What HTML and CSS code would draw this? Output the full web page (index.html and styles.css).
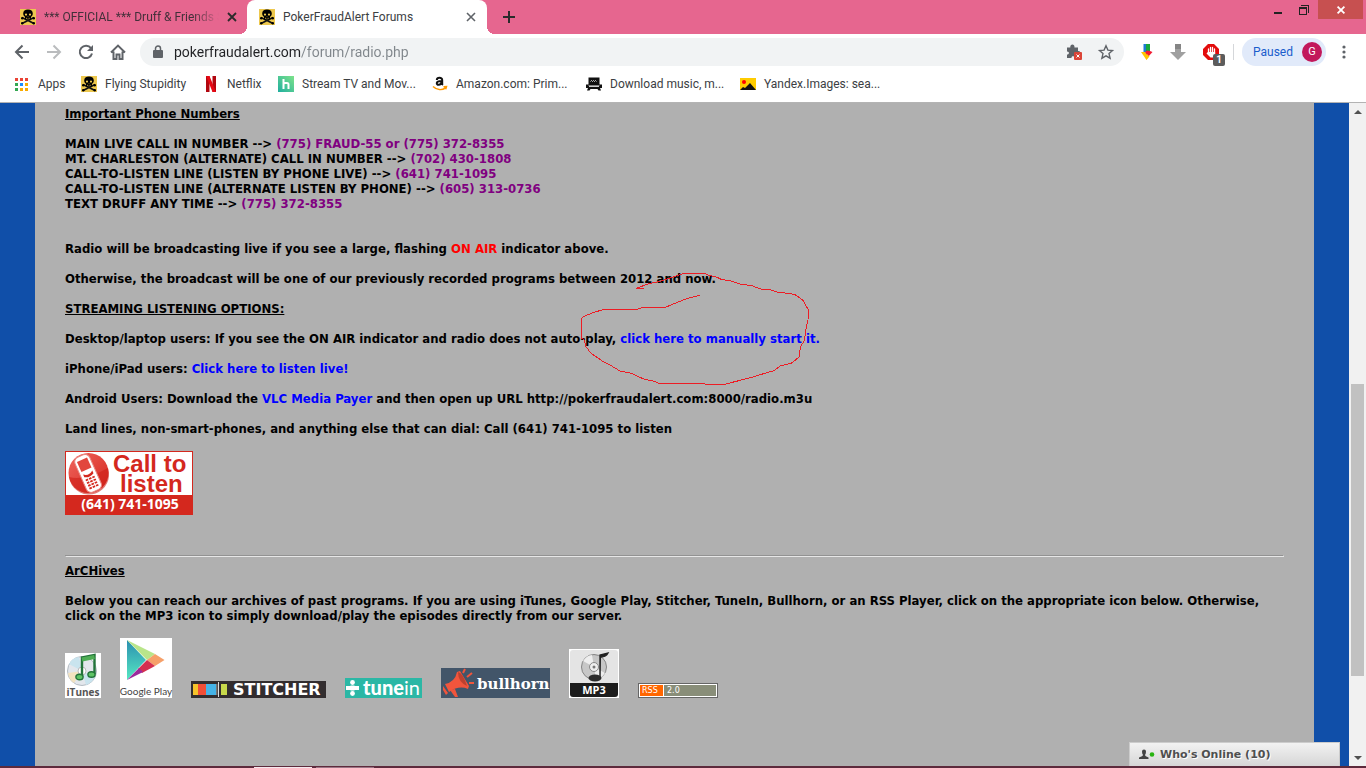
FILE: index.html
```html
<!DOCTYPE html>
<html lang="en">
<head>
<meta charset="utf-8">
<title>PokerFraudAlert Forums</title>
<link rel="stylesheet" href="styles.css">
</head>
<body>
<svg class="defs" aria-hidden="true">
  <symbol id="skull" viewBox="0 0 16 16">
    <rect width="16" height="16" fill="#edc84e"/>
    <path d="M2 8.5L14 14.5M14 8.5L2 14.5" stroke="#111" stroke-width="1.8"/>
    <circle cx="2.2" cy="9.2" r="1.2"/><circle cx="13.8" cy="9.2" r="1.2"/><circle cx="2.2" cy="14.2" r="1.2"/><circle cx="13.8" cy="14.2" r="1.2"/>
    <path d="M3.2 4.5C3.2 1.8 5 .5 8 .5s4.800 1.300 4.800 4c0 1.600-.6 2.500-1.800 3.200V10.500H5V7.700C3.800 7 3.200 6.100 3.200 4.500z"/>
    <circle cx="6" cy="5.600" r="1.100" fill="#edc84e"/><circle cx="10" cy="5.600" r="1.100" fill="#edc84e"/>
    <path d="M6 9.300h1M7.700 9.300h.8M9.300 9.300h.8M7.700 7.400h.6" stroke="#edc84e" stroke-width=".8"/>
  </symbol>
</svg>

<header class="browser">
  <div class="tabstrip">
    <div class="tab">
      <svg class="favicon"><use href="#skull"/></svg>
      <span class="tab-title faded">*** OFFICIAL *** Druff &amp; Friends S</span>
      <button class="tab-close" aria-label="Close tab"><svg width="10" height="10" viewBox="0 0 10 10"><path d="M1 1l8 8M9 1L1 9" stroke="#2b2b2b" stroke-width="1.800"/></svg></button>
    </div>
    <div class="tab active">
      <svg class="favicon"><use href="#skull"/></svg>
      <span class="tab-title">PokerFraudAlert Forums</span>
      <button class="tab-close" aria-label="Close tab"><svg width="10" height="10" viewBox="0 0 10 10"><path d="M1 1l8 8M9 1L1 9" stroke="#5f6368" stroke-width="1.600"/></svg></button>
    </div>
    <button class="new-tab" aria-label="New tab"><svg width="12" height="12" viewBox="0 0 12 12"><path d="M6 0v12M0 6h12" stroke="#2b2b2b" stroke-width="2"/></svg></button>
    <div class="window-controls">
      <button aria-label="Minimize"><svg width="8" height="12" viewBox="0 0 8 12"><path d="M0 9h8" stroke="#222" stroke-width="2"/></svg></button>
      <button aria-label="Restore"><svg width="10" height="10" viewBox="0 0 10 10" fill="none" stroke="#222" shape-rendering="crispEdges"><path d="M2 .5h7.500V8"/><path d="M.5 2.500h7v7h-7zM.5 3.500h7"/></svg></button>
      <button class="window-close" aria-label="Close"><svg width="8" height="8" viewBox="0 0 8 8"><path d="M.6.6l6.800 6.800M7.400.6L.6 7.400" stroke="#fff" stroke-width="1.800"/></svg></button>
    </div>
  </div>

  <div class="toolbar">
    <div class="nav">
      <button aria-label="Back"><svg width="16" height="16" viewBox="0 0 16 16" fill="none" stroke="#5f6368" stroke-width="2"><path d="M15 8H2.500M8.500 1.500L2 8l6.500 6.500"/></svg></button>
      <button aria-label="Forward"><svg width="16" height="16" viewBox="0 0 16 16" fill="none" stroke="#babcbe" stroke-width="2"><path d="M1 8h12.500M7.500 1.500L14 8l-6.500 6.500"/></svg></button>
      <button aria-label="Reload"><svg width="16" height="16" viewBox="0 0 16 16"><path d="M13 4.200A6.200 6.200 0 1 0 14 9.500" fill="none" stroke="#5f6368" stroke-width="2"/><path d="M15 1v6H9z" fill="#5f6368"/></svg></button>
      <button aria-label="Home"><svg width="16" height="16" viewBox="0 0 16 16" fill="none" stroke="#5f6368" stroke-width="2"><path d="M1 8.500L8 1.600l7 6.900M3.500 7.500V15h3v-4.500h3V15h3V7.500"/></svg></button>
    </div>
    <div class="omnibox">
      <svg width="10" height="14" viewBox="0 0 10 14"><path d="M2.500 6V3.500a2.500 2.500 0 0 1 5 0V6" fill="none" stroke="#5f6368" stroke-width="1.500"/><rect x="0" y="5" width="10" height="8" rx="1" fill="#5f6368"/></svg>
      <input class="url" type="text" aria-label="Address" value="pokerfraudalert.com/forum/radio.php">
      <button aria-label="Blocked plugin"><svg width="17" height="17" viewBox="0 0 17 17"><path d="M1 3.500h3.300c-.5-4 4.700-4 4.200 0H12V7c3.200-.5 3.200 4 0 3.500V14H8.500c.2-2.500-3.300-2.500-3 0H1v-3.500c2.600.2 2.600-3.200 0-3z" fill="#5f6368"/><rect x="8" y="8" width="8" height="8" rx="1" fill="#db4437"/><path d="M10.500 10.500l3 3m0-3l-3 3" stroke="#fff"/></svg></button>
      <button aria-label="Bookmark"><svg width="16" height="16" viewBox="0 0 16 16"><path d="M8 1.800l1.900 4.300 4.600.4-3.500 3.100 1.100 4.600L8 11.800l-4.100 2.400L5 9.600 1.500 6.500l4.600-.4z" fill="none" stroke="#5f6368" stroke-width="1.400"/></svg></button>
    </div>
    <div class="extensions">
      <button aria-label="Downloader"><svg width="12" height="16" viewBox="0 0 12 16"><path d="M2.500 0H6v8l-3.500.5z" fill="#1f7ad1"/><path d="M5 0h4v7H5z" fill="#16a83b"/><path d="M0 8h4l3 4-1.500 4z" fill="#ffc400"/><path d="M4 8l2-1.500L9 7l2.500 1L7 13z" fill="#f31931"/><path d="M4 12l2-2 2.500 2.500L5.500 16z" fill="#ffc400"/></svg></button>
      <button aria-label="Download"><svg width="16" height="16" viewBox="0 0 16 16"><path d="M5 0h6v8h5l-8 8-8-8h5z" fill="#a0a0a0"/><path d="M5 0h6v5H5z" fill="#858585"/></svg></button>
      <button aria-label="Ad blocker" class="badged"><svg width="16" height="16" viewBox="0 0 16 16"><path d="M5 0h6l5 5v6l-5 5H5l-5-5V5z" fill="#e30c0c"/><path d="M5.500 5v4M7.500 3.500v5M9.500 3.500v5M11.500 5v5" stroke="#fff" stroke-width="1.300" stroke-linecap="round"/><path d="M4.900 8h7.200v3l-2 2.500H7.500L3.500 9.500z" fill="#fff"/></svg><span class="badge">1</span></button>
    </div>
    <button class="profile">Paused <span class="avatar">G</span></button>
    <button class="menu" aria-label="Menu"><svg width="4" height="14" viewBox="0 0 4 14" fill="#5f6368"><circle cx="2" cy="2" r="1.600"/><circle cx="2" cy="7" r="1.600"/><circle cx="2" cy="12" r="1.600"/></svg></button>
  </div>

  <nav class="bookmarks">
    <a href="#" class="apps"><svg width="13" height="13" viewBox="0 0 13 13"><path d="M0 0h3v3H0zM5 0h3v3H5zM10 0h3v3h-3z" fill="#ea4335"/><path d="M0 5h3v3H0zM0 10h3v3H0z" fill="#34a853"/><path d="M5 5h3v3H5z" fill="#1a8cff"/><path d="M10 5h3v3h-3zM5 10h3v3H5zM10 10h3v3h-3z" fill="#f9ab00"/></svg><span>Apps</span></a>
    <a href="#" class="stupidity"><svg class="favicon"><use href="#skull"/></svg><span>Flying Stupidity</span></a>
    <a href="#" class="netflix"><svg width="16" height="16" viewBox="0 0 16 16"><path d="M3 0h3.500v16H3zM9.500 0H13v16H9.500z" fill="#b1060f"/><path d="M3 0h3.500L13 16H9.500z" fill="#e50914"/></svg><span>Netflix</span></a>
    <a href="#" class="stream"><svg width="16" height="16" viewBox="0 0 16 16"><defs><linearGradient id="hulu" x1="1" y1="0" x2="0" y2="1"><stop offset="0" stop-color="#7ee38a"/><stop offset="1" stop-color="#1fae9f"/></linearGradient></defs><rect width="16" height="16" fill="url(#hulu)"/><path d="M5.500 3v10M5.500 8.500q0-1.500 1.500-1.500h2q1.500 0 1.500 1.500V13" fill="none" stroke="#fff" stroke-width="2"/></svg><span>Stream TV and Mov...</span></a>
    <a href="#" class="amazon"><svg width="16" height="16" viewBox="0 0 16 16"><path d="M4.800 4C5 1.200 10.200 1 10.200 4v3.500q0 1 .7 1.500M9.500 5C3 5 4.500 9 6.500 8.800 8.500 8.700 9.500 7.500 9.500 6" fill="none" stroke="#111" stroke-width="2"/><path d="M1 10.500c4 3.800 9 3.800 12.500 1.500M11.500 10.800l3-.3-.8 2.800" fill="none" stroke="#f90" stroke-width="1.500"/></svg><span>Amazon.com: Prim...</span></a>
    <a href="#" class="music"><svg width="16" height="16" viewBox="0 0 16 16"><path d="M2.500 1.500h11v8h-11zM0 8.500h2.500v1.500h11V8.500H16v3.500h-2l1 2.500h-2.500L11.500 13h-7l-1 1.500H1L2 12H0z" fill="#111"/><path d="M4.500 5.500l1-1 1 1 1-1 1 1 1-1 1 1M3 10.500h10" fill="none" stroke="#fff" stroke-width=".8"/></svg><span>Download music, m...</span></a>
    <a href="#" class="yandex"><svg width="16" height="12" viewBox="0 0 16 12"><rect width="16" height="12" fill="#fc0"/><path d="M0 12l3-3 2 1 5-5 6 7z" fill="#111"/><circle cx="4" cy="4" r="2" fill="#f00"/></svg><span>Yandex.Images: sea...</span></a>
  </nav>
</header>

<div class="viewport">
  <main class="page">
    <div class="content">
      <h2>Important Phone Numbers</h2>
      <p class="wide">MAIN LIVE CALL IN NUMBER --&gt; <span class="phone">(775) FRAUD-55 or (775) 372-8355</span><br>
      MT. CHARLESTON (ALTERNATE) CALL IN NUMBER --&gt; <span class="phone">(702) 430-1808</span><br>
      CALL-TO-LISTEN LINE (LISTEN BY PHONE LIVE) --&gt; <span class="phone">(641) 741-1095</span><br>
      CALL-TO-LISTEN LINE (ALTERNATE LISTEN BY PHONE) --&gt; <span class="phone">(605) 313-0736</span><br>
      TEXT DRUFF ANY TIME --&gt; <span class="phone">(775) 372-8355</span></p>
      <p>Radio will be broadcasting live if you see a large, flashing <span class="onair">ON AIR</span> indicator above.</p>
      <p>Otherwise, the broadcast will be one of our previously recorded programs between 2012 and now.</p>
      <h2>STREAMING LISTENING OPTIONS:</h2>
      <p>Desktop/laptop users: If you see the ON AIR indicator and radio does not auto-play, <a href="#">click here to manually start it.</a></p>
      <p>iPhone/iPad users: <a href="#">Click here to listen live!</a></p>
      <p>Android Users: Download the <a href="#">VLC Media Payer</a> and then open up URL http://pokerfraudalert.com:8000/radio.m3u</p>
      <p>Land lines, non-smart-phones, and anything else that can dial: Call (641) 741-1095 to listen</p>
      <a class="call" href="#">
        <svg width="128" height="64" viewBox="0 0 128 64">
          <defs><linearGradient id="ball" x1="0" y1="0" x2="1" y2="1"><stop offset="0" stop-color="#f0665e"/><stop offset="1" stop-color="#d3241c"/></linearGradient></defs>
          <rect width="128" height="64" fill="#d4281e"/><rect x="1" y="1" width="126" height="43" fill="#fff"/>
          <circle cx="23.500" cy="22" r="20" fill="url(#ball)"/>
          <path d="M4 26Q20 30 43 17A20 20 0 0 1 5 30z" fill="#cf2018" opacity=".6"/>
          <g transform="rotate(-24 24 22)"><rect x="15" y="3" width="16" height="38" rx="5" fill="#fff" stroke="#e9857f"/><rect x="17.500" y="7" width="11" height="11" fill="#e2463d"/><path d="M18 21q5 4 10 0v3q-5 3-10 0z" fill="#d4281e"/><path d="M18 27.500h10M18 30.500h10M18 33.500h10M18 36.500h10" stroke="#d4281e" stroke-width="1.800" stroke-dasharray="2.600 1"/></g>
          <text class="call-big" x="48" y="21">Call to</text><text class="call-big" x="55" y="41">listen</text>
          <text class="call-number" x="65" y="58" text-anchor="middle">(641) 741-1095</text>
        </svg>
      </a>
      <hr>
      <h2>ArCHives</h2>
      <p>Below you can reach our archives of past programs. If you are using iTunes, Google Play, Stitcher, TuneIn, Bullhorn, or an RSS Player, click on the appropriate icon below. Otherwise,<br>click on the MP3 icon to simply download/play the episodes directly from our server.</p>
      <div class="players">
        <a href="#"><svg width="36" height="45" viewBox="0 0 36 45">
          <rect width="36" height="45" fill="#fff"/><circle cx="17" cy="18" r="14.500" fill="#e3e7ec" stroke="#b4bbc2"/><path d="M17 18L4 11Q8 4 14 4zM17 18l13 6q-3 6-9 8z" fill="#c9e4ee"/><path d="M17 18L3 20q1 7 6 10z" fill="#f3e3c0"/><circle cx="17" cy="18" r="4" fill="#fff" stroke="#bbb"/>
          <path d="M17 24V4.500L29.500 2v19" fill="none" stroke="#23743a" stroke-width="2.400"/><path d="M17 6.500L29.500 4" stroke="#4fae55" stroke-width="4"/><ellipse cx="14.500" cy="24" rx="3.600" ry="2.800" fill="#5fc465" stroke="#23743a" stroke-width="1.400"/><ellipse cx="26.500" cy="21.500" rx="3.600" ry="2.800" fill="#5fc465" stroke="#23743a" stroke-width="1.400"/>
          <text class="itunes" x="18" y="43" text-anchor="middle">iTunes</text></svg></a>
        <a href="#"><svg width="52" height="60" viewBox="0 0 52 60">
          <defs><linearGradient id="play" x1="0" y1="0" x2="0" y2="1"><stop offset="0" stop-color="#2b8fb0"/><stop offset="1" stop-color="#56e8c2"/></linearGradient></defs>
          <rect width="52" height="60" fill="#fff"/><path d="M7 2v40l19-20z" fill="url(#play)"/><path d="M7 2l20 20 8-6z" fill="#b9e58a"/><path d="M35 16l9.500 6L35 28l-8-6z" fill="#f6a069"/><path d="M27 22l8 6-13 7-4-4z" fill="#d5304f"/><path d="M7 42l12-12 4 4z" fill="#9b2a9b"/>
          <text class="gplay" x="26" y="57" text-anchor="middle">Google Play</text></svg></a>
        <a href="#"><svg width="135" height="17" viewBox="0 0 135 17">
          <rect width="135" height="17" fill="#322d2f"/><path d="M2 3h5v11H2z" fill="#f6c32a"/><path d="M7 3h8v11H7z" fill="#f04e37"/><path d="M15 3h10v11H15z" fill="#45b3e7"/><path d="M25 3h1.500v11H25z" fill="#777"/><path d="M27.500 1v15" stroke="#ddd"/><path d="M30 3h6v11h-6z" fill="#c8d94b"/>
          <text class="stitcher" x="42" y="14">STITCHER</text></svg></a>
        <a href="#"><svg width="77" height="20" viewBox="0 0 77 20">
          <rect width="77" height="20" fill="#2bb7a5"/><path d="M1 10h13M7.500 7.500v5" stroke="#fff" stroke-width="4"/><circle cx="7.500" cy="4.500" r="2.400" fill="#fff"/><circle cx="7.500" cy="15.500" r="2.400" fill="#fff"/>
          <text class="tunein" x="18" y="17"><tspan class="heavy">tune</tspan>in</text></svg></a>
        <a href="#"><svg width="109" height="30" viewBox="0 0 109 30">
          <rect width="109" height="30" fill="#425569"/><path d="M2 18l5 7-2 2-3-5zM4 16Q14 14 16 4l3-1 9 15-1 3Q18 17 8 24z" fill="#f1553c"/><path d="M17 4q5 1 9 14-9-4-9-14z" fill="#bd412f"/><path d="M9 22l5 7h3l-3-8z" fill="#f1553c"/><path d="M22 5l2-4M26 9l5-4M28 15h5" stroke="#f1553c" stroke-width="2"/>
          <text class="bullhorn" x="36" y="21">bullhorn</text></svg></a>
        <a href="#"><svg width="50" height="49" viewBox="0 0 50 49">
          <rect width="50" height="49" fill="#fff"/><rect x="1" y="1" width="48" height="47" rx="3" fill="#e4e4e4"/><path d="M1 34h48v11q0 3-3 3H4q-3 0-3-3z" fill="#1c1c1c"/>
          <circle cx="25" cy="18" r="12.500" fill="#c7c7c7" stroke="#858585"/><path d="M25 18L14 12q4-6 9-6zM25 18l11 6q-4 6-9 6z" fill="#eee"/><circle cx="25" cy="18" r="4.500" fill="#eee" stroke="#888"/><circle cx="25" cy="18" r="1.500" fill="#777"/><path d="M31 28V6l8-2q-2 4-7 4" fill="#222" stroke="#222" stroke-width="1.400"/><ellipse cx="26" cy="29" rx="6.500" ry="3.500" fill="#2b2b2b"/>
          <text class="mp3" x="25" y="45" text-anchor="middle">MP3</text></svg></a>
        <a href="#"><svg width="80" height="15" viewBox="0 0 80 15">
          <rect width="80" height="15" fill="#666"/><rect x="1" y="1" width="78" height="13" fill="#fff"/><rect x="2" y="2" width="23" height="11" fill="#f60"/><rect x="26" y="2" width="52" height="11" fill="#898e79"/>
          <text class="rss" x="4" y="10">RSS</text><text class="rss" x="29" y="10">2.0</text></svg></a>
      </div>
    </div>
    <svg class="scribble" viewBox="0 0 780 405" fill="none" stroke="#ed1c24" stroke-width="3" shape-rendering="crispEdges" aria-hidden="true"><path d="M221 85H199L239 70L268 65L315 49L343 40H402L417 46L437 50L454 58L484 63L511 72L545 77L575 88L600 89L623 97L655 100L675 104L698 120L715 149L714 180L706 216L704 240L691 261L688 291L663 310L631 318L612 332L571 344L542 353L463 373H415L385 370H266L254 364L221 357L184 340L150 333L120 315L97 303L78 290L63 280L48 260L43 240L35 234V174L48 166L78 155L101 149H197L217 143H284L322 127L352 115L389 106"/></svg>
    <button class="online"><svg width="17" height="11" viewBox="0 0 17 11"><path d="M3 2.500Q3 .5 5 .5t2 2q0 2-1 3.500 0 1 3.500 2.500V10H0V8.500Q4 7 4 6 3 4.500 3 2.500z" fill="#444"/><circle cx="13" cy="5.500" r="2.300" fill="#28b411"/></svg>Who's Online (10)</button>
  </main>
  <div class="scrollbar" aria-hidden="true">
    <div class="arrow"><svg width="8" height="4" viewBox="0 0 8 4"><path d="M0 4l4-4 4 4z" fill="#505050"/></svg></div>
    <div class="before"></div><div class="thumb"></div><div class="after"></div>
    <div class="arrow"><svg width="8" height="4" viewBox="0 0 8 4"><path d="M0 0l4 4 4-4z" fill="#505050"/></svg></div>
  </div>
</div>
<div class="taskbar"><span></span><span class="dim"></span></div>
</body>
</html>
```
FILE: styles.css
```css
* { box-sizing: border-box; }
body {
  margin: 0;
  height: 100vh;
  display: flex;
  flex-direction: column;
  overflow: hidden;
  background: #fff;
  font-family: "Segoe UI", Roboto, "Open Sans", sans-serif;
  font-size: 12px;
  color: #3c4043;
}
button {
  border: 0;
  padding: 0;
  background: none;
  font: inherit;
  color: inherit;
  display: flex;
  align-items: center;
  justify-content: center;
}
a { text-decoration: none; color: inherit; }
svg { display: block; flex: none; overflow: visible; }
.defs { width: 0; height: 0; position: absolute; }
.favicon { width: 16px; height: 16px; }

/* Tab strip */
.browser { flex: none; border-bottom: 1px solid #b3b3b3; }
.tabstrip { display: flex; height: 34px; background: #e6668f; }
.tab {
  position: relative;
  display: flex;
  align-items: center;
  gap: 8px;
  width: 247px;
  padding: 0 10px 0 20px;
}
.tab.active {
  width: 240px;
  padding: 0 11px 0 12px;
  background: #fff;
  border-radius: 8px 8px 0 0;
}
.tab.active::before,
.tab.active::after {
  content: "";
  position: absolute;
  bottom: 0;
  width: 8px;
  height: 8px;
}
.tab.active::before { left: -8px; background: radial-gradient(circle at 0 0, transparent 8px, #fff 8px); }
.tab.active::after { right: -8px; background: radial-gradient(circle at 100% 0, transparent 8px, #fff 8px); }
.tab-title { flex: 1; overflow: hidden; white-space: nowrap; }
.faded { color: #43303a; -webkit-mask-image: linear-gradient(90deg, #000 85%, transparent); mask-image: linear-gradient(90deg, #000 85%, transparent); }
.tab-close { width: 10px; height: 16px; }
.new-tab { width: 44px; }
.window-controls { margin-left: auto; margin-right: 3px; display: flex; height: 19px; }
.window-controls button { width: 26px; }
.window-controls .window-close { width: 45px; margin-left: 1px; background: #c75050; }

/* Toolbar */
.toolbar { display: flex; align-items: center; height: 36px; padding: 0 20px 0 14px; }
.nav { display: flex; gap: 16px; margin-right: 14px; }
.omnibox {
  flex: 1;
  display: flex;
  align-items: center;
  gap: 15px;
  height: 28px;
  padding: 0 10px 0 13px;
  border-radius: 14px;
  background: #f1f3f4;
}
.url {
  flex: 1;
  min-width: 0;
  margin-left: -4px;
  padding: 0;
  border: 0;
  outline: 0;
  font: 14px "Segoe UI", Roboto, "Open Sans", sans-serif;
  color: #202124;
  background: linear-gradient(90deg, #202124 127px, #80868b 127px);
  -webkit-background-clip: text;
  background-clip: text;
  -webkit-text-fill-color: transparent;
}
.extensions {
  display: flex;
  gap: 17px;
  padding-right: 14px;
  margin: 0 8px 0 17px;
  border-right: 1px solid #d5d7da;
}
.badged { position: relative; }
.badge {
  position: absolute;
  left: 10px;
  top: 10px;
  width: 12px;
  height: 12px;
  border-radius: 2px;
  background: #5c5c5c;
  color: #fff;
  font-size: 10px;
  font-weight: 700;
  line-height: 12px;
}
.profile {
  gap: 9px;
  height: 28px;
  padding: 0 4px 0 11px;
  border-radius: 14px;
  background: #e1eafa;
  color: #1a5dcc;
}
.avatar {
  width: 20px;
  height: 20px;
  border-radius: 50%;
  background: #c2185b;
  color: #fff;
  font-size: 11px;
  line-height: 20px;
}
.menu { margin-left: 16px; }

/* Bookmarks */
.bookmarks { display: flex; height: 32px; padding: 0 0 4px 15px; }
.bookmarks a { display: flex; align-items: center; gap: 8px; white-space: nowrap; }
.bookmarks .apps { width: 66px; gap: 10px; }
.stupidity { width: 122px; }
.netflix { width: 75px; }
.stream { width: 154px; }
.amazon { width: 154px; }
.music { width: 154px; }

/* Page */
.viewport { flex: 1; min-height: 0; display: flex; }
.page {
  position: relative;
  flex: 1;
  padding: 0 35px;
  overflow: hidden;
  background: #104fa9;
}
.content {
  min-height: 100%;
  padding: 3px 30px 0;
  background: #b0b0b0;
  color: #000;
  font: bold 13px/15px Tahoma, "DejaVu Sans Condensed", "DejaVu Sans", sans-serif;
}
.content h2 { margin: 0 0 15px; font: inherit; text-decoration: underline; }
.content p { margin: 0 0 15px; }
.content p.wide { margin-bottom: 30px; }
.content p a { color: #00f; }
.phone { color: #800080; }
.onair { color: #f00; }
.call { display: block; width: 128px; }
.content hr { margin: 40px 0 6px; border: 1px inset #e6e6e6; }
.players { display: flex; align-items: flex-end; gap: 19px; }

/* Lettering on the player badges */
.call-big { font: bold 24px "Liberation Sans", Arial, sans-serif; fill: #d4281e; }
.call-number { font: bold 14px "Open Sans", sans-serif; fill: #fff; }
.itunes { font: bold 10px "Open Sans", sans-serif; fill: #555; }
.gplay { font: 10px Lato, sans-serif; fill: #444; }
.stitcher { font: bold 16px "DejaVu Sans", sans-serif; fill: #fff; }
.tunein { font: 20px Lato, sans-serif; fill: #fff; }
.heavy { font-weight: 900; }
.bullhorn { font: bold 15px "DejaVu Serif", serif; fill: #fff; }
.mp3 { font: bold 11px "Open Sans", sans-serif; fill: #fff; }
.rss { font: 8px "DejaVu Sans", sans-serif; fill: #fff; }

.scribble { position: absolute; left: 570px; top: 157px; width: 260px; height: 135px; pointer-events: none; }
.online {
  position: absolute;
  right: 9px;
  bottom: 0;
  width: 211px;
  height: 24px;
  gap: 4px;
  justify-content: flex-start;
  padding-left: 9px;
  border: 1px solid #ccc;
  border-bottom: 0;
  background: linear-gradient(#f2f2f2, #d6d6d6);
  color: #4f4f4f;
  font: bold 11px Verdana, "DejaVu Sans", sans-serif;
  text-shadow: 1px 1px 0 #fff;
}

/* Scrollbar */
.scrollbar { display: flex; flex-direction: column; align-items: center; width: 17px; background: #f1f1f1; }
.arrow { display: flex; align-items: center; height: 17px; }
.before { flex: 264; }
.thumb { flex: 292; width: 13px; background: #c1c1c1; }
.after { flex: 73; }

.taskbar { flex: none; display: flex; gap: 4px; height: 2px; padding: 1px 0 0 254px; background: #5d2a3c; }
.taskbar span { width: 58px; background: #f5e9ee; }
.taskbar .dim { background: #9b7584; }
```
